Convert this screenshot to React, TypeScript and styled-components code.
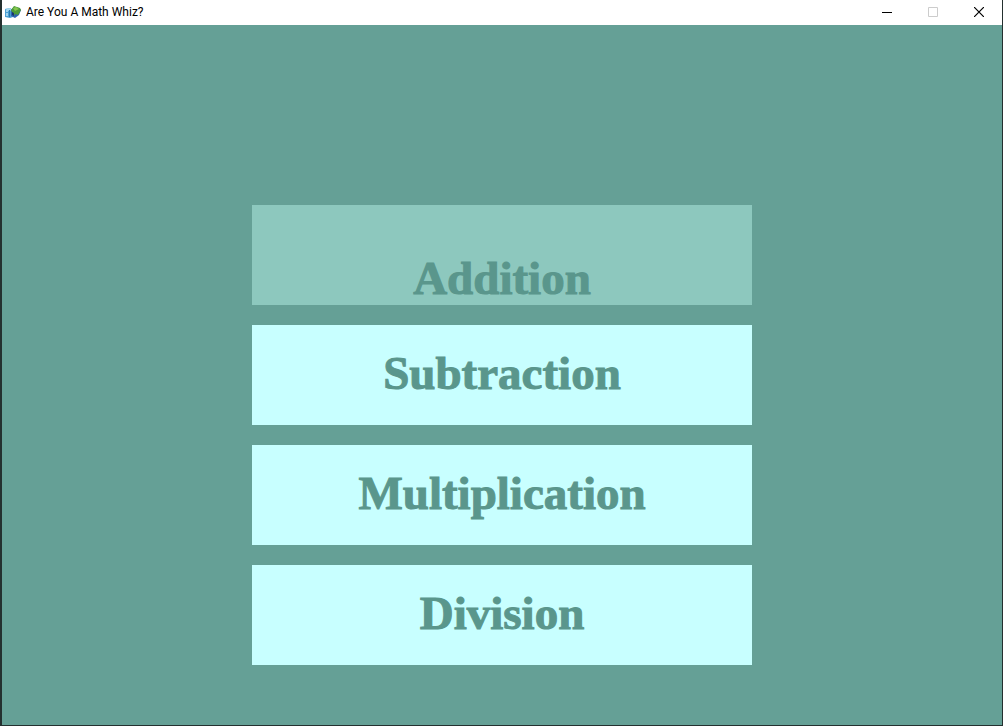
import React from "react";
import styled, { createGlobalStyle } from "styled-components";

const Global = createGlobalStyle`
  * { box-sizing: border-box; }
  body { margin: 0; background: #65a096; }
`;

const Frame = styled.div`
  display: flex;
  flex-direction: column;
  min-height: 100vh;
  border: solid #24302f;
  border-width: 0 1px 1px 2px;
  background: #65a096;
`;

const TitleBar = styled.header`
  display: flex;
  align-items: center;
  height: 25px;
  padding: 0 0 1px 3px;
  background: #ffffff;
`;

const Title = styled.h1`
  flex: 1;
  margin: 0 0 0 5px;
  font: 400 12px/24px Roboto, "Open Sans", sans-serif;
  color: #000000;
`;

const WindowButton = styled.button`
  display: flex;
  align-items: center;
  justify-content: center;
  width: 46px;
  height: 24px;
  padding: 0;
  border: 0;
  background: transparent;
  color: #000000;

  &:disabled { color: #cccccc; }
`;

const Menu = styled.main`
  display: flex;
  flex-direction: column;
  align-items: center;
  gap: 20px;
  padding: 180px 24px 60px;
`;

const MenuButton = styled.button<{ $active?: boolean }>`
  width: 100%;
  max-width: 500px;
  height: 100px;
  padding: ${(p) => (p.$active ? "50px 0 4px" : "0 0 4px")};
  border: 0;
  background: ${(p) => (p.$active ? "#8dc8be" : "#c8ffff")};
  color: #5a968c;
  font: 700 47px/46px "Liberation Serif", serif;
  -webkit-text-stroke: 1px #5a968c;
`;

const AppIcon = () => (
  <svg width="16" height="16" viewBox="0 0 16 16" aria-hidden="true">
    <path d="M0 5 5 4 8 6v7l-3 1-5-1z" fill="#4a9fd4" />
    <path d="M0 5 5 4 7 6 4 7z" fill="#a5d8ee" />
    <path d="M1 6h2v2H1zM1 9h2v3H1z" fill="#a0d4ee" />
    <path d="M4.5 6v7" stroke="#2878ac" />
    <path d="m6 6 3-3 5 1 2 2-2 5-4 3-4-2z" fill="#2c62b0" />
    <path d="m6 6 3-4 6 2 1 2-3 5-3-1-1 2-2-4z" fill="#4c9b38" />
    <path d="m8 4 3-1 3 2-4 2z" fill="#85c64d" />
    <path d="m7 8 2 1v3l-2-1z" fill="#17356f" />
  </svg>
);

const operations = ["Addition", "Subtraction", "Multiplication", "Division"];

export default function App() {
  return (
    <>
      <Global />
      <Frame>
        <TitleBar>
          <AppIcon />
          <Title>Are You A Math Whiz?</Title>
          <WindowButton aria-label="Minimize">
            <svg width="10" height="10" viewBox="0 0 10 10">
              <path d="M0 5.5h10" stroke="currentColor" />
            </svg>
          </WindowButton>
          <WindowButton aria-label="Maximize" disabled>
            <svg width="10" height="10" viewBox="0 0 10 10">
              <path d="M.5.5h9v9h-9z" fill="none" stroke="currentColor" />
            </svg>
          </WindowButton>
          <WindowButton aria-label="Close">
            <svg width="10" height="10" viewBox="0 0 10 10">
              <path d="m0 0 10 10M10 0 0 10" stroke="currentColor" strokeWidth="1.2" />
            </svg>
          </WindowButton>
        </TitleBar>
        <Menu>
          {operations.map((name, i) => (
            <MenuButton key={name} $active={i === 0}>
              {name}
            </MenuButton>
          ))}
        </Menu>
      </Frame>
    </>
  );
}
